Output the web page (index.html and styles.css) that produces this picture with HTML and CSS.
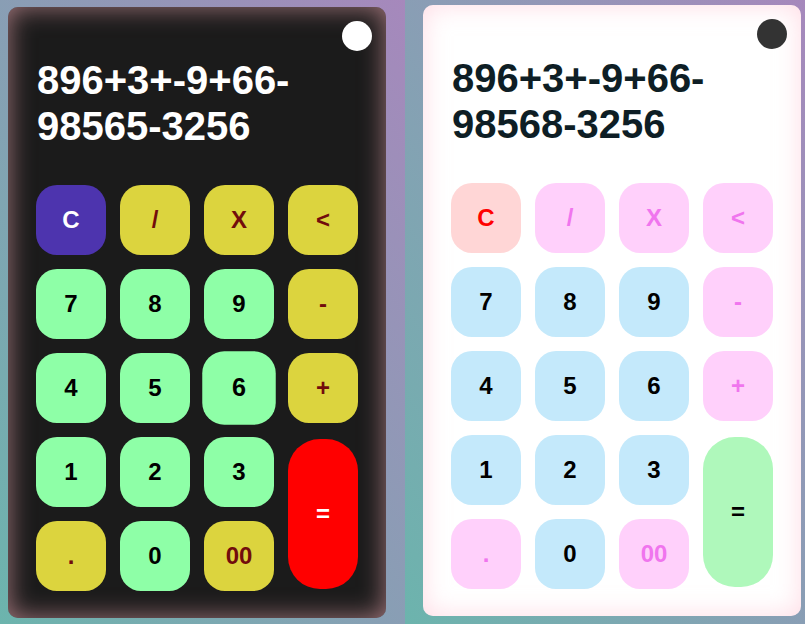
FILE: index.html
```html
<!DOCTYPE html>
<html lang="en">
<head>
<meta charset="utf-8">
<title>Calculators</title>
<link rel="stylesheet" href="styles.css">
</head>
<body>
<div class="stage">
  <section class="panel panel-left">
    <div class="calc calc-dark">
      <div class="calc-top"><span class="toggle"></span></div>
      <div class="display">896+3+-9+66-<br>98565-3256</div>
      <div class="keys">
        <button class="key key-clear">C</button>
        <button class="key key-op">/</button>
        <button class="key key-op">X</button>
        <button class="key key-op">&lt;</button>
        <button class="key key-num">7</button>
        <button class="key key-num">8</button>
        <button class="key key-num">9</button>
        <button class="key key-op">-</button>
        <button class="key key-num">4</button>
        <button class="key key-num">5</button>
        <button class="key key-num is-hover">6</button>
        <button class="key key-op">+</button>
        <button class="key key-num">1</button>
        <button class="key key-num">2</button>
        <button class="key key-num">3</button>
        <button class="key key-eq">=</button>
        <button class="key key-op">.</button>
        <button class="key key-num">0</button>
        <button class="key key-op">00</button>
      </div>
    </div>
  </section>
  <section class="panel panel-right">
    <div class="calc calc-light">
      <div class="calc-top"><span class="toggle"></span></div>
      <div class="display">896+3+-9+66-<br>98568-3256</div>
      <div class="keys">
        <button class="key key-clear">C</button>
        <button class="key key-op">/</button>
        <button class="key key-op">X</button>
        <button class="key key-op">&lt;</button>
        <button class="key key-num">7</button>
        <button class="key key-num">8</button>
        <button class="key key-num">9</button>
        <button class="key key-op">-</button>
        <button class="key key-num">4</button>
        <button class="key key-num">5</button>
        <button class="key key-num">6</button>
        <button class="key key-op">+</button>
        <button class="key key-num">1</button>
        <button class="key key-num">2</button>
        <button class="key key-num">3</button>
        <button class="key key-eq">=</button>
        <button class="key key-op">.</button>
        <button class="key key-num">0</button>
        <button class="key key-op">00</button>
      </div>
    </div>
  </section>
</div>
</body>
</html>
```
FILE: styles.css
```css
* { box-sizing: border-box; }
html, body { margin: 0; padding: 0; }
body {
  width: 805px;
  height: 624px;
  overflow: hidden;
  font-family: "Liberation Sans", Arial, sans-serif;
}
.stage {
  display: flex;
  height: 624px;
}
.panel {
  height: 624px;
  background: linear-gradient(to top right, #6cb4ad, #a688bc);
}
.panel-left { width: 405px; padding: 7px 0 0 8px; }
.panel-right { flex: 1; padding: 5px 0 0 18px; }

.calc {
  width: 378px;
  height: 611px;
  border-radius: 10px;
  padding: 14px 14px 0 14px;
  display: flex;
  flex-direction: column;
}
.calc-dark {
  background: #1b1b1b;
  box-shadow: inset 0 0 26px rgba(255, 180, 190, 0.6);
}
.calc-light {
  background: #ffffff;
  box-shadow: inset 0 0 26px rgba(255, 190, 205, 0.55);
}
.calc-top {
  display: flex;
  justify-content: flex-end;
  height: 30px;
}
.toggle {
  width: 30px;
  height: 30px;
  border-radius: 50%;
}
.calc-dark .toggle { background: #ffffff; }
.calc-light .toggle { background: #333333; }

.display {
  margin-top: 6px;
  padding: 0 15px;
  height: 92px;
  font-size: 40px;
  line-height: 46px;
  font-weight: bold;
}
.calc-dark .display { color: #ffffff; }
.calc-light .display { color: #0e1e25; }

.keys {
  margin-top: 36px;
  padding: 0 14px;
  display: grid;
  grid-template-columns: repeat(4, 70px);
  grid-auto-rows: 70px;
  gap: 14px;
}
.key {
  border: none;
  border-radius: 21px;
  font-family: "Liberation Sans", Arial, sans-serif;
  font-size: 24px;
  font-weight: bold;
  padding: 0;
  display: flex;
  align-items: center;
  justify-content: center;
}
.key-eq {
  grid-column: 4;
  grid-row: 4 / span 2;
  height: 150px;
  align-self: center;
  border-radius: 32px;
}
.is-hover { transform: scale(1.05); }

.calc-dark .key-clear { background: #4d34ae; color: #ffffff; }
.calc-dark .key-op { background: #dcd43e; color: #720c0c; }
.calc-dark .key-num { background: #8effa7; color: #000000; }
.calc-dark .key-eq { background: #ff0000; color: #ffffff; }

.calc-light .key-clear { background: #ffd6d6; color: #ff0000; }
.calc-light .key-op { background: #ffd0fb; color: #f075ee; }
.calc-light .key-num { background: #c4e9fb; color: #000000; }
.calc-light .key-eq { background: #aff8bb; color: #000000; }
```
